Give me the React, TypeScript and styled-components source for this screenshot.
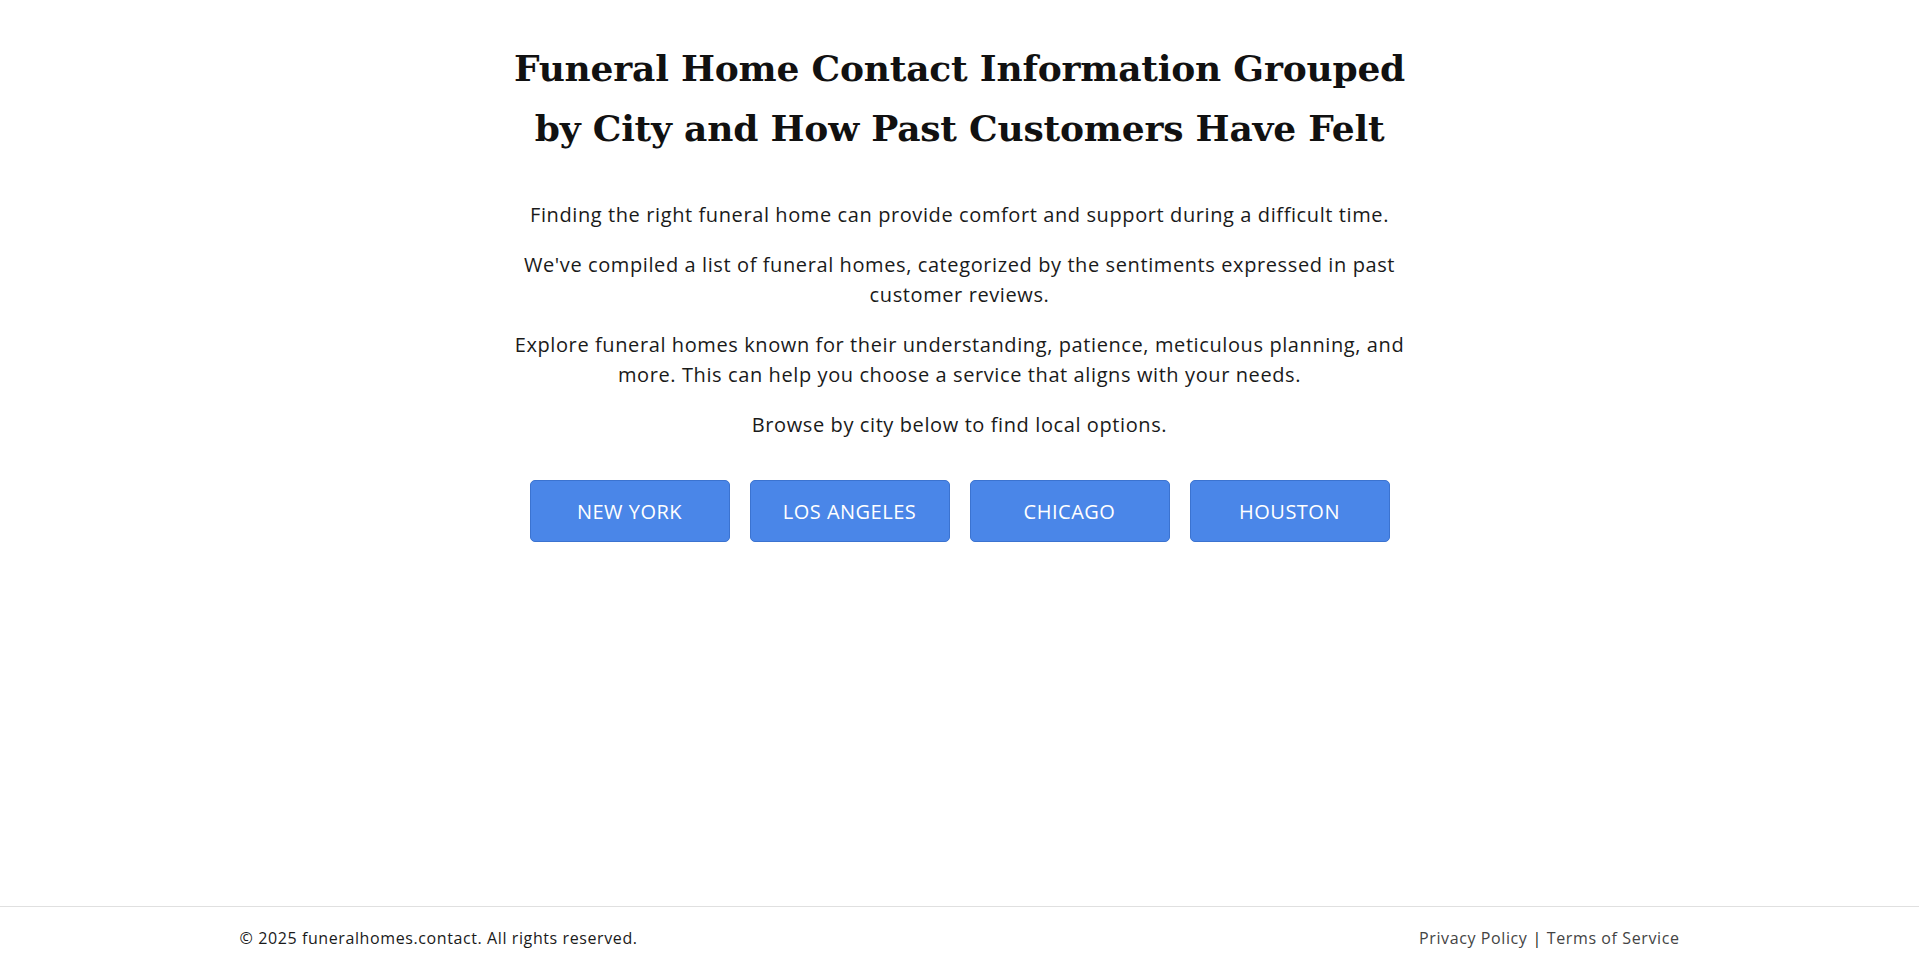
import React from 'react';
import styled, {createGlobalStyle} from "styled-components";

const GlobalStyle = createGlobalStyle`
  html, body {
    margin: 0;
    padding: 0;
    background: #ffffff;
  }
  body {
    font-family: "Open Sans", "Noto Sans", sans-serif;
    color: #111111;
  }
`

const cities = ['New York', 'Los Angeles', 'Chicago', 'Houston'];

export default function App() {
    return (
        <Page>
            <GlobalStyle/>
            <Main>
                <Title>Funeral Home Contact Information Grouped by City and How Past Customers Have Felt</Title>
                <Intro>Finding the right funeral home can provide comfort and support during a difficult time.</Intro>
                <Intro>We've compiled a list of funeral homes, categorized by the sentiments expressed in past customer reviews.</Intro>
                <Intro>Explore funeral homes known for their understanding, patience, meticulous planning, and more. This can help you choose a service that aligns with your needs.</Intro>
                <Intro>Browse by city below to find local options.</Intro>
                <CityRow>
                    {cities.map(c => (
                        <CityButton key={c}>{c}</CityButton>
                    ))}
                </CityRow>
            </Main>
            <Footer>
                <FooterInner>
                    <Copy>© 2025 funeralhomes.contact. All rights reserved.</Copy>
                    <Links>
                        <FooterLink href="#">Privacy Policy</FooterLink>
                        <Sep>|</Sep>
                        <FooterLink href="#">Terms of Service</FooterLink>
                    </Links>
                </FooterInner>
            </Footer>
        </Page>
    );
}

const Page = styled.div`
  min-height: 100vh;
  display: flex;
  flex-direction: column;
`
const Main = styled.main`
  flex: 1;
  width: 900px;
  margin: 0 auto;
  padding-top: 38px;
  text-align: center;
`
const Title = styled.h1`
  font: 700 36px/60px "DejaVu Serif", "Liberation Serif", serif;
  color: #111111;
  margin: 0 0 42px;
  letter-spacing: -0.2px;
`
const Intro = styled.p`
  font-size: 20px;
  line-height: 30px;
  margin: 0 0 20px;
  color: #1a1a1a;
  letter-spacing: 0.6px;
`
const CityRow = styled.div`
  display: flex;
  justify-content: center;
  gap: 20px;
  margin-top: 40px;
`
const CityButton = styled.button`
  width: 200px;
  height: 62px;
  background: #4a86e8;
  border: 1px solid #3b73d0;
  border-radius: 5px;
  color: #ffffff;
  font: 400 20px "Open Sans", sans-serif;
  letter-spacing: 0.5px;
  text-transform: uppercase;
  cursor: pointer;
`
const Footer = styled.footer`
  border-top: 1px solid #e0e0e0;
  padding: 20px 0;
`
const FooterInner = styled.div`
  width: 1440px;
  margin: 0 auto;
  display: flex;
  justify-content: space-between;
  align-items: center;
  font-size: 16px;
  line-height: 23px;
  letter-spacing: 0.6px;
`
const Copy = styled.span`
  color: #1a1a1a;
`
const Links = styled.div`
  display: flex;
  gap: 5px;
  color: #1a1a1a;
`
const FooterLink = styled.a`
  color: #444444;
  text-decoration: none;
`
const Sep = styled.span`
  color: #1a1a1a;
`
